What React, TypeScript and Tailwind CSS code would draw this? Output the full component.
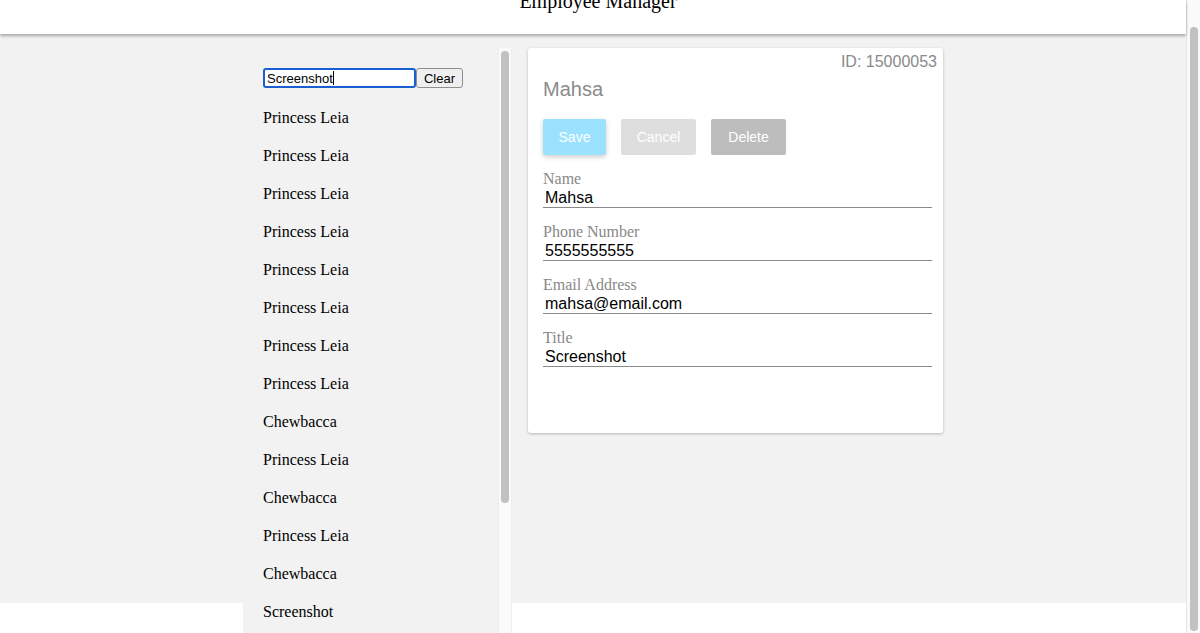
import React from 'react';

const PEOPLE = [
  'Princess Leia',
  'Princess Leia',
  'Princess Leia',
  'Princess Leia',
  'Princess Leia',
  'Princess Leia',
  'Princess Leia',
  'Princess Leia',
  'Chewbacca',
  'Princess Leia',
  'Chewbacca',
  'Princess Leia',
  'Chewbacca',
  'Screenshot',
];

const FIELDS = [
  { label: 'Name', value: 'Mahsa' },
  { label: 'Phone Number', value: '5555555555' },
  { label: 'Email Address', value: 'mahsa@email.com' },
  { label: 'Title', value: 'Screenshot' },
];

const SERIF = 'font-["Liberation_Serif",serif]';
const SANS = 'font-["Liberation_Sans",Arial,sans-serif]';

function Sidebar() {
  return (
    <div className="w-[255px] shrink-0 bg-[#f2f2f2] pt-[34px] pl-[20px] overflow-hidden">
      <div className="flex items-center h-[20px]">
        <div className="relative w-[153px] h-[20px] border-2 border-[#1a5fd1] rounded-[3px] bg-white flex items-center pl-[2px]">
          <span className={`${SANS} text-[13px] text-black leading-none`}>Screenshot</span>
          <span className="w-px h-[14px] bg-black" />
        </div>
        <button
          type="button"
          className={`${SANS} w-[47px] h-[20px] text-[13px] leading-none text-black bg-[#efefef] border border-[#8f8f8f] rounded-[3px]`}
        >
          Clear
        </button>
      </div>
      <ul className="mt-[11px]">
        {PEOPLE.map((name, i) => (
          <li key={i} className={`${SERIF} h-[38px] flex items-center text-[16px] text-black`}>
            {name}
          </li>
        ))}
      </ul>
    </div>
  );
}

function ListScrollbar() {
  return (
    <div className="w-[14px] shrink-0 flex flex-col">
      <div className="h-[14px] bg-[#f2f2f2]" />
      <div className="flex-1 bg-[#fafafa] border-x border-[#efefef] pt-[3px] flex justify-center">
        <div className="w-[8px] h-[452px] rounded-full bg-[#c1c1c1]" />
      </div>
    </div>
  );
}

function EmployeeCard() {
  return (
    <div className="w-[415px] h-[385px] bg-white rounded-[3px] shadow-[0_1px_3px_rgba(0,0,0,0.25)] pt-[4px] pl-[15px] pr-[6px]">
      <div className={`${SANS} text-right text-[16px] leading-[20px] text-[#8a8a8a]`}>ID: 15000053</div>
      <div className={`${SANS} mt-[2px] text-[20px] leading-[30px] text-[#8a8a8a]`}>Mahsa</div>
      <div className="mt-[15px] flex gap-[15px]">
        <button
          type="button"
          className={`${SANS} w-[63px] h-[36px] rounded-[2px] bg-[#9be2ff] text-white text-[14px] shadow-[0_2px_5px_rgba(0,0,0,0.2)]`}
        >
          Save
        </button>
        <button
          type="button"
          className={`${SANS} w-[75px] h-[36px] rounded-[2px] bg-[#dedede] text-white text-[14px]`}
        >
          Cancel
        </button>
        <button
          type="button"
          className={`${SANS} w-[75px] h-[36px] rounded-[2px] bg-[#bdbdbd] text-white text-[14px]`}
        >
          Delete
        </button>
      </div>
      <div className="mt-[15px] w-[389px] flex flex-col gap-[15px]">
        {FIELDS.map((f) => (
          <div key={f.label}>
            <div className={`${SERIF} text-[16px] leading-[18px] text-[#888888]`}>{f.label}</div>
            <div className={`${SANS} pl-[2px] text-[16px] leading-[19px] text-black border-b border-[#8a8a8a]`}>
              {f.value}
            </div>
          </div>
        ))}
      </div>
    </div>
  );
}

export default function App() {
  return (
    <div className="w-[1200px] h-[633px] flex overflow-hidden bg-white">
      <div className="w-[1186px] flex flex-col">
        <header className="relative z-10 h-[34px] bg-white shadow-[0_2px_3px_rgba(0,0,0,0.3)] overflow-hidden flex justify-center pl-[10px]">
          <h1 className={`${SERIF} -mt-[9px] text-[20px] leading-[20px] text-black`}>Employee Manager</h1>
        </header>
        <div className="flex-1 flex min-h-0">
          <div className="w-[243px] shrink-0 flex flex-col">
            <div className="h-[569px] bg-[#f2f2f2]" />
          </div>
          <Sidebar />
          <ListScrollbar />
          <div className="flex-1 flex flex-col">
            <div className="h-[569px] bg-[#f2f2f2] pt-[14px] pl-[16px]">
              <EmployeeCard />
            </div>
          </div>
        </div>
      </div>
      <div className="w-[14px] shrink-0 bg-[#fafafa] border-l border-[#e6e6e6] pt-[27px] flex justify-center">
        <div className="w-[8px] h-[604px] rounded-full bg-[#c1c1c1]" />
      </div>
    </div>
  );
}
